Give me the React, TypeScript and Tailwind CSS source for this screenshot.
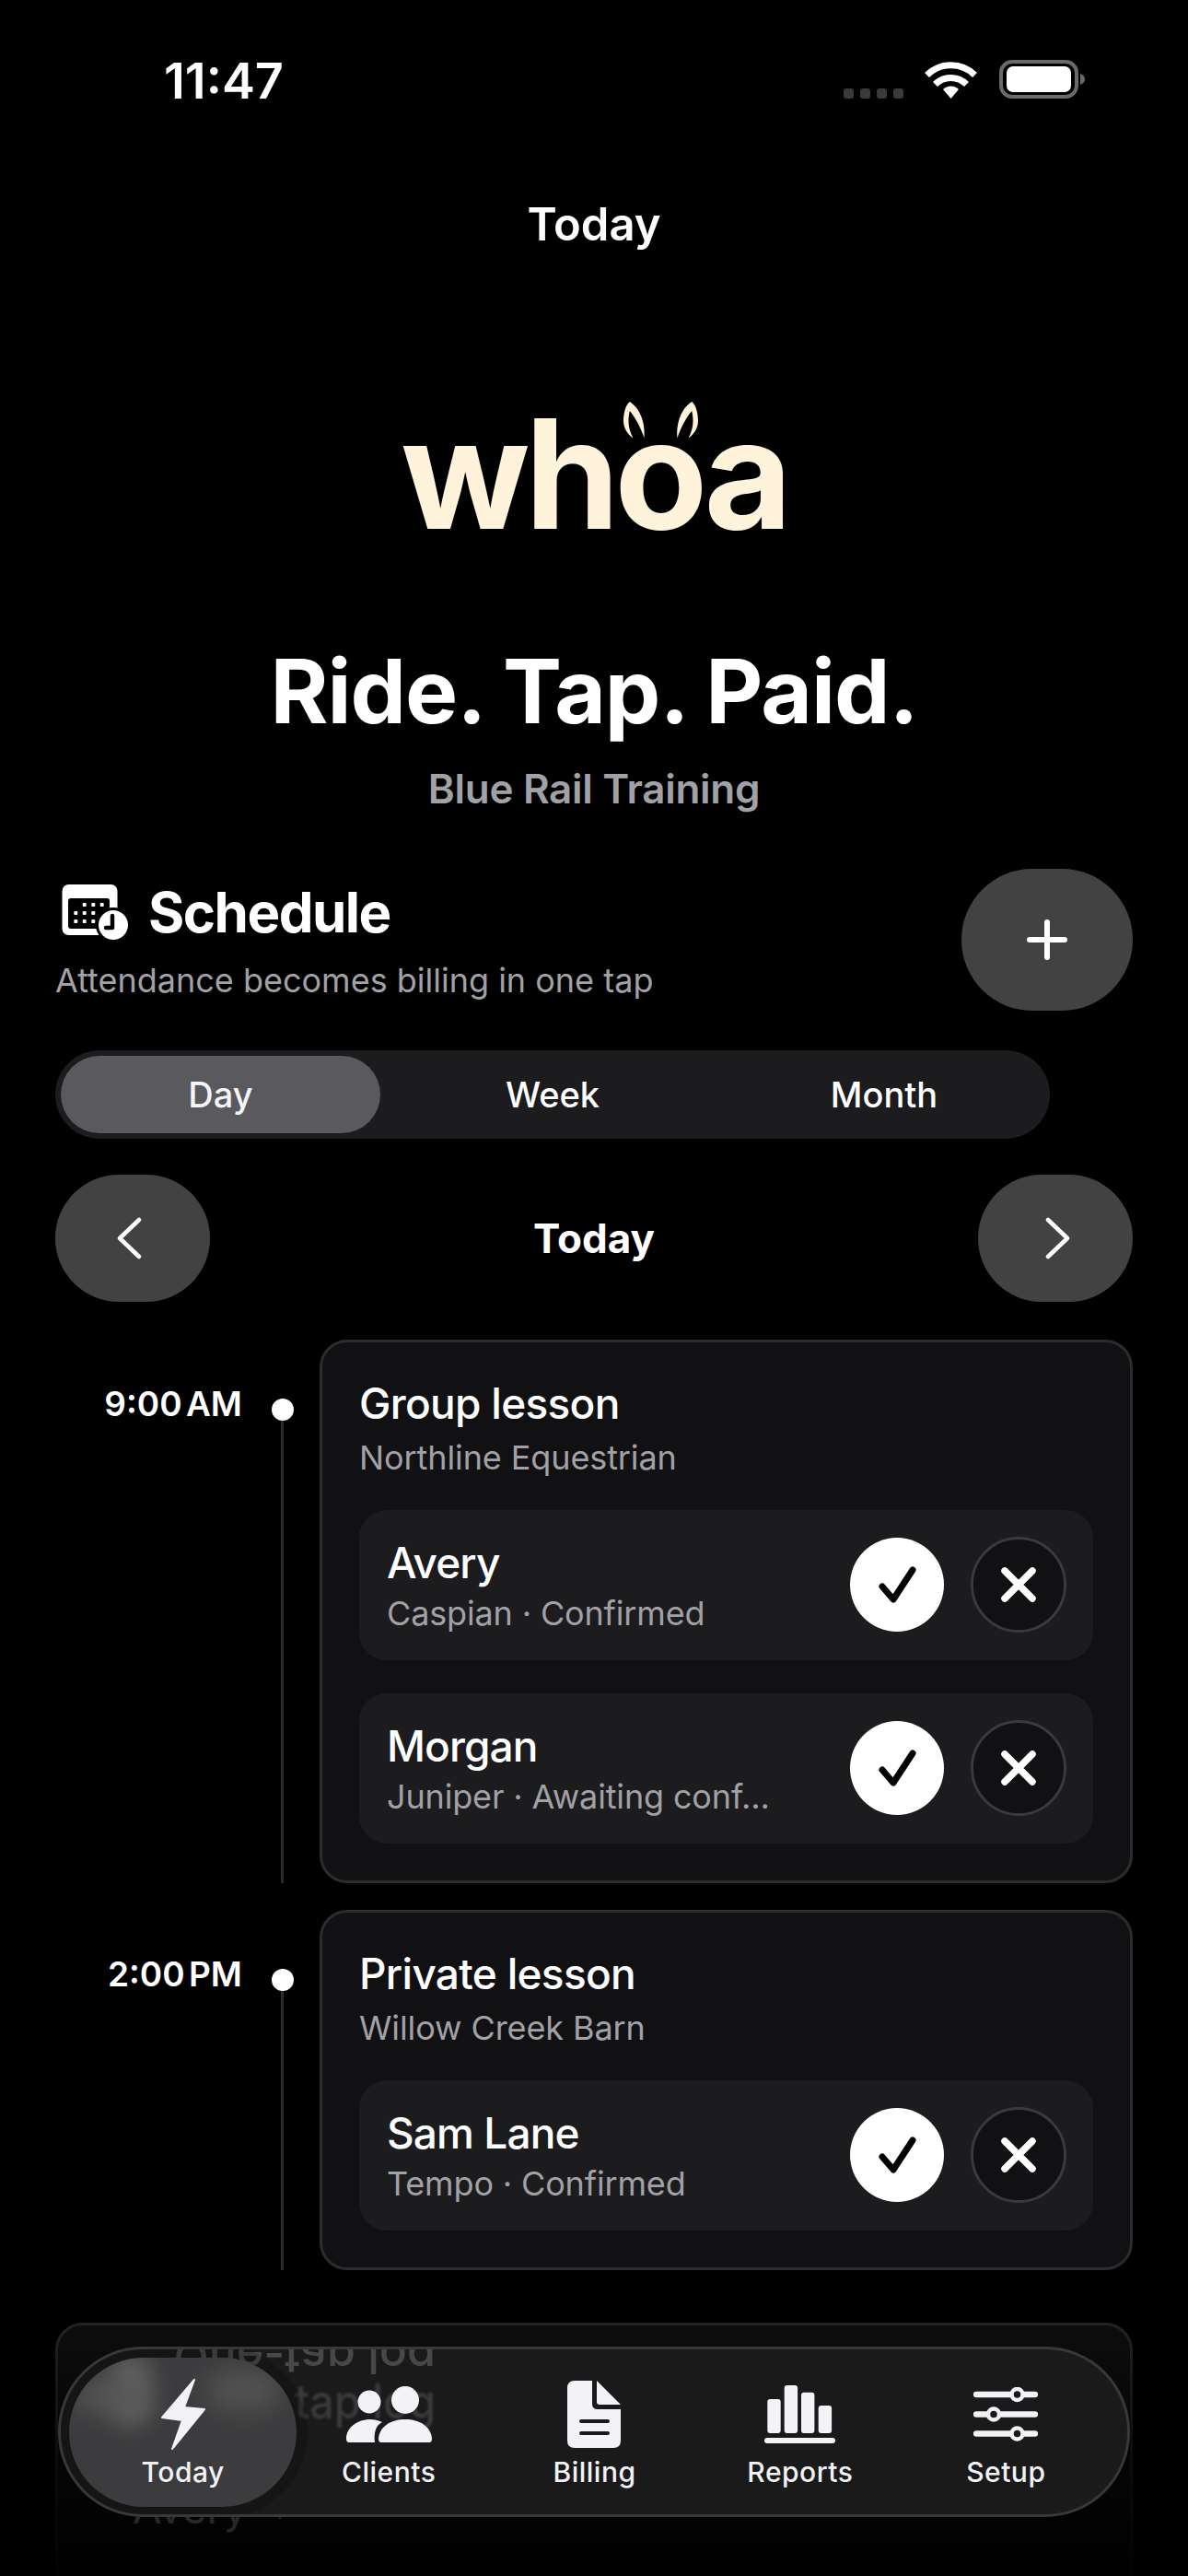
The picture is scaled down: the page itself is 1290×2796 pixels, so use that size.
import React from 'react';

const sessions = [
  {
    time: '9:00 AM',
    title: 'Group lesson',
    place: 'Northline Equestrian',
    riders: [
      { name: 'Avery', note: 'Caspian · Confirmed' },
      { name: 'Morgan', note: 'Juniper · Awaiting conf...' },
    ],
  },
  {
    time: '2:00 PM',
    title: 'Private lesson',
    place: 'Willow Creek Barn',
    riders: [{ name: 'Sam Lane', note: 'Tempo · Confirmed' }],
  },
];

function StatusIcons() {
  return (
    <div className="flex items-end">
      <div className="flex gap-[7px] mb-0">
        {[0, 1, 2, 3].map((i) => (
          <div key={i} className="w-[11px] h-[11px] rounded-[3px] bg-[#3a3a3a]" />
        ))}
      </div>
      <svg className="ml-[23px]" width="57" height="41" viewBox="0 0 57 41" fill="none">
        <path d="M2.5 15.5A37 37 0 0 1 54.5 15.5" stroke="#fff" strokeWidth="7" />
        <path d="M11.5 25.5A24 24 0 0 1 45.5 25.5" stroke="#fff" strokeWidth="7" />
        <path d="M20 31A12 12 0 0 1 37 31L28.5 41Z" fill="#fff" />
      </svg>
      <svg className="ml-[24px]" width="94" height="42" viewBox="0 0 94 42" fill="none">
        <rect x="2" y="2" width="82" height="38" rx="12" stroke="#6a6a6a" strokeWidth="4" />
        <rect x="8" y="7" width="70" height="28" rx="7" fill="#fff" />
        <path d="M88 15C91 16 93 18 93 21C93 24 91 26 88 27Z" fill="#6a6a6a" />
      </svg>
    </div>
  );
}

function CalendarClockIcon() {
  return (
    <svg width="73" height="61" viewBox="0 0 73 61" fill="none">
      <rect x="0.5" y="0" width="60" height="55" rx="7" fill="#fff" />
      <rect x="7" y="15" width="45" height="33" rx="3" fill="#000" />
      {[
        [24.7, 22], [34.3, 22], [43.7, 22],
        [15.3, 31], [24.7, 31], [34.3, 31],
        [15.3, 40], [24.7, 40], [34.3, 40],
      ].map(([x, y]) => (
        <rect key={`${x}-${y}`} x={x - 2} y={y - 2} width="4" height="4" rx="1" fill="#fff" />
      ))}
      <circle cx="56" cy="44" r="19" fill="#000" />
      <circle cx="56" cy="44" r="16" fill="#fff" />
      <path d="M55 34V47H48" stroke="#000" strokeWidth="4.5" strokeLinecap="round" strokeLinejoin="round" />
    </svg>
  );
}

function Ear({ flip }: { flip?: boolean }) {
  return (
    <svg className={flip ? '-scale-x-100' : ''} width="24" height="40" viewBox="0 0 24 40" fill="#fff3dc">
      <path d="M6.8 0C2 4 0 13 0 21C0 29 5 36 10.5 39.5C7 33 5.5 27 5.5 21C5.5 17 6 13 6.8 10C12 16 19 28 22.5 39.5C23.5 30 22 10 6.8 0Z" />
    </svg>
  );
}

function RiderRow({ name, note }: { name: string; note: string }) {
  return (
    <div className="flex items-center justify-between h-[163px] rounded-[30px] bg-[#1c1c1e] pl-[30px] pr-[29px]">
      <div>
        <div className="text-[46px] leading-[54px] font-medium tracking-[-0.9px] text-white">{name}</div>
        <div className="mt-[6px] text-[36px] leading-[44px] tracking-[-0.15px] text-[#a1a1a6]">{note}</div>
      </div>
      <div className="-mt-[1px] flex items-center gap-[29px]">
        <div className="w-[102px] h-[102px] rounded-full bg-white flex items-center justify-center">
          <svg className="ml-[2px]" width="42" height="40" viewBox="0 0 42 40" fill="none">
            <path d="M4 22L16 36L37 4" stroke="#000" strokeWidth="7" strokeLinecap="round" strokeLinejoin="round" />
          </svg>
        </div>
        <div className="w-[104px] h-[104px] rounded-full bg-[#111113] border-[3px] border-[#3a3a3c] flex items-center justify-center">
          <svg width="38" height="38" viewBox="0 0 38 38" fill="none">
            <path d="M4 4L34 34M34 4L4 34" stroke="#fff" strokeWidth="7.5" strokeLinecap="round" />
          </svg>
        </div>
      </div>
    </div>
  );
}

const iconColor = '#f2f2f7';

const tabs = [
  {
    label: 'Today',
    icon: (
      <svg width="48" height="77" viewBox="0 0 48 77" fill={iconColor} stroke={iconColor} strokeWidth="2" strokeLinejoin="round">
        <path d="M36 1L1 42L23 45L12 76L47 33L25 31Z" />
      </svg>
    ),
  },
  {
    label: 'Clients',
    icon: (
      <svg width="93" height="61" viewBox="0 0 93 61" fill={iconColor}>
        <circle cx="25" cy="17" r="12.5" />
        <circle cx="64" cy="15" r="15" />
        <path d="M3 61Q0 61 0 57C0 45 12 36 26 36C30 36 35 37 39 39C31 43 30 52 31 61Z" />
        <path d="M38 61Q35 61 35 57C36 44 48 36 64 36C80 36 92 44 93 57Q93 61 90 61Z" />
      </svg>
    ),
  },
  {
    label: 'Billing',
    icon: (
      <svg width="58" height="73" viewBox="0 0 58 73" fill={iconColor}>
        <path d="M8 0H27V25Q27 31 33 31H58V65Q58 73 50 73H8Q0 73 0 65V8Q0 0 8 0Z" />
        <path d="M32 0L58 26H35Q32 26 32 23Z" />
        <path d="M15 44H44M15 57H44" stroke="#1a1a1b" strokeWidth="4" strokeLinecap="round" />
      </svg>
    ),
  },
  {
    label: 'Reports',
    icon: (
      <svg width="77" height="63" viewBox="0 0 77 63" fill={iconColor}>
        <rect x="3.3" y="15" width="14.4" height="37" rx="3" />
        <rect x="21.7" y="0" width="14.4" height="52" rx="3" />
        <rect x="40" y="7.7" width="14.4" height="44.3" rx="3" />
        <rect x="58.7" y="22" width="14.4" height="30" rx="3" />
        <rect x="0" y="57" width="77" height="6" rx="3" />
      </svg>
    ),
  },
  {
    label: 'Setup',
    icon: (
      <svg width="70" height="59" viewBox="0 0 70 59" fill="#1a1a1b" stroke={iconColor}>
        <path d="M3 8H67M3 29.5H67M3 50.5H67" strokeWidth="6.5" strokeLinecap="round" />
        <circle cx="47.5" cy="8" r="6" strokeWidth="4.5" />
        <circle cx="22" cy="29.5" r="6" strokeWidth="4.5" />
        <circle cx="47.5" cy="50.5" r="6" strokeWidth="4.5" />
      </svg>
    ),
  },
];

function TabBar() {
  return (
    <div className="absolute left-[63px] top-[2547px] w-[1164px] h-[185px] rounded-[92px] border-[3px] border-[#38383a] bg-[#1a1a1b] overflow-hidden">
      {/* ghost of the card below, bent by the glass */}
      <div className="absolute right-[751px] top-[-19px] blur-[0.6px] -scale-y-100 text-[50px] leading-[56px] font-medium text-[#48484a] whitespace-nowrap">
        One-tap log
      </div>
      <div className="absolute right-[751px] top-[27px] origin-right scale-x-[0.9] blur-[1px] text-[52px] leading-[60px] font-medium text-[#3a3a3c] whitespace-nowrap">
        tap log
      </div>

      <div className="absolute left-[9px] top-[9px] w-[247px] h-[162px] rounded-[81px] bg-[#3c3c3e] overflow-hidden shadow-[0_0_0_12px_rgba(0,0,0,0.18)]">
        <div className="absolute left-[45px] top-[-5px] w-[44px] h-[80px] rounded-full bg-[#626262] blur-[12px]" />
        <div className="absolute left-[5px] top-[25px] w-[80px] h-[34px] rounded-full bg-[#565656] blur-[14px]" />
        <div className="absolute left-[150px] top-[12px] w-[80px] h-[46px] rounded-full bg-[#525252] blur-[14px]" />
      </div>

      <div className="relative grid grid-cols-5 w-[1117px] ml-[21px] pt-[30px]">
        {tabs.map((tab) => (
          <div key={tab.label} className="flex flex-col items-center">
            <div className="h-[80px] flex items-center justify-center">{tab.icon}</div>
            <div className="mt-[3px] text-[30px] leading-[40px] font-medium tracking-[0.5px] text-[#f2f2f7]">{tab.label}</div>
          </div>
        ))}
      </div>
    </div>
  );
}

export default function App() {
  return (
    <div className="relative w-[1290px] h-[2796px] overflow-hidden bg-black text-white font-['Inter',sans-serif]">
      {/* status bar */}
      <div className="flex items-end justify-between h-[42px] mt-[65px] pl-[178px] pr-[111px]">
        <div className="-mb-[2px] text-[54px] leading-[42px] font-semibold">11:47</div>
        <StatusIcons />
      </div>

      <div className="mt-[107px] text-center text-[49px] leading-[60px] font-semibold">Today</div>

      {/* logo */}
      <div className="mt-[158px] flex justify-center">
        <div className="relative text-[165px] leading-[165px] font-bold tracking-[-5.5px] text-[#fff3dc]">
          whoa
          <div className="absolute left-[242px] top-[4px] flex gap-[33px]">
            <Ear />
            <Ear flip />
          </div>
        </div>
      </div>

      <div className="mt-[98px] text-center text-[96px] leading-[110px] font-bold tracking-[-1px]">Ride. Tap. Paid.</div>
      <div className="mt-[23px] text-center text-[44px] leading-[56px] font-semibold tracking-[-0.3px] text-[#a1a1a6]">Blue Rail Training</div>

      <div className="mt-[59px] px-[60px]">
        {/* schedule header */}
        <div className="flex items-start justify-between h-[154px]">
          <div className="pt-[12px]">
            <div className="flex items-center h-[70px] pl-[7px] gap-[22px]">
              <CalendarClockIcon />
              <div className="text-[60px] leading-[70px] font-bold tracking-[-1.5px] -ml-[1px]">Schedule</div>
            </div>
            <div className="mt-[14px] text-[36px] leading-[50px] text-[#a1a1a6]">Attendance becomes billing in one tap</div>
          </div>
          <div className="w-[186px] h-[154px] rounded-[77px] bg-[#424242] flex items-center justify-center">
            <svg width="44" height="44" viewBox="0 0 44 44" fill="none">
              <path d="M22 3V41M3 22H41" stroke="#fff" strokeWidth="6" strokeLinecap="round" />
            </svg>
          </div>
        </div>

        {/* range switch */}
        <div className="mt-[43px] grid grid-cols-3 w-[1080px] h-[96px] rounded-[48px] bg-[#1c1c1e] text-[38px] font-medium">
          <div className="my-[6px] ml-[6px] mr-[7px] rounded-[42px] bg-[#5a5a5e] flex items-center justify-center text-[#f5f5f7]">Day</div>
          <div className="flex items-center justify-center">Week</div>
          <div className="flex items-center justify-center">Month</div>
        </div>

        {/* date stepper */}
        <div className="mt-[39px] flex items-center justify-between h-[138px]">
          <div className="w-[168px] h-[138px] rounded-[69px] bg-[#424242] flex items-center justify-center">
            <svg className="mr-[8px]" width="28" height="46" viewBox="0 0 28 46" fill="none">
              <path d="M25 3L4 23L25 43" stroke="#fff" strokeWidth="4.5" strokeLinecap="round" strokeLinejoin="round" />
            </svg>
          </div>
          <div className="text-[44px] font-bold">Today</div>
          <div className="w-[168px] h-[138px] rounded-[69px] bg-[#424242] flex items-center justify-center">
            <svg className="ml-[6px]" width="28" height="46" viewBox="0 0 28 46" fill="none">
              <path d="M3 3L24 23L3 43" stroke="#fff" strokeWidth="4.5" strokeLinecap="round" strokeLinejoin="round" />
            </svg>
          </div>
        </div>

        {/* timeline */}
        <div className="mt-[41px] flex flex-col gap-[29px]">
          {sessions.map((session) => (
            <div key={session.time} className="flex">
              <div className="w-[203px] pt-[48px] text-right text-[37px] leading-[44px] font-semibold [word-spacing:-5px]">{session.time}</div>
              <div className="w-[84px] pl-[3px] pt-[64px] flex flex-col items-center">
                <div className="w-[24px] h-[24px] rounded-full bg-white" />
                <div className="flex-1 w-[3px] bg-[#2c2c2e]" />
              </div>
              <div className="flex-1 rounded-[30px] border-[3px] border-[#2c2c2e] bg-[#111113] px-[40px] pt-[38px] pb-[40px]">
                <div className="text-[46px] leading-[56px] font-medium tracking-[-0.7px]">{session.title}</div>
                <div className="mt-[9px] text-[36px] leading-[44px] tracking-[-0.1px] text-[#a1a1a6]">{session.place}</div>
                <div className="mt-[35px] flex flex-col gap-[36px]">
                  {session.riders.map((rider) => (
                    <RiderRow key={rider.name} name={rider.name} note={rider.note} />
                  ))}
                </div>
              </div>
            </div>
          ))}

          {/* next card, scrolled under the tab bar */}
          <div className="mt-[28px] h-[400px] rounded-[30px] border-[3px] border-[#2c2c2e] bg-[#111113] pl-[81px] pt-[40px]">
            <div className="text-[46px] leading-[56px] font-medium">One-tap log</div>
            <div className="mt-[75px] flex items-center gap-[24px] text-[46px] leading-[54px]">
              <span>Avery</span>
              <svg width="24" height="24" viewBox="0 0 24 24" fill="none">
                <path d="M1 3L12 22L23 3" stroke="#fff" strokeWidth="3" />
              </svg>
            </div>
          </div>
        </div>
      </div>

      {/* fade over the bottom of the scroll area */}
      <div className="absolute inset-x-0 bottom-0 h-[280px] bg-gradient-to-b from-black/20 via-black/70 to-black/95" />

      <TabBar />
    </div>
  );
}
